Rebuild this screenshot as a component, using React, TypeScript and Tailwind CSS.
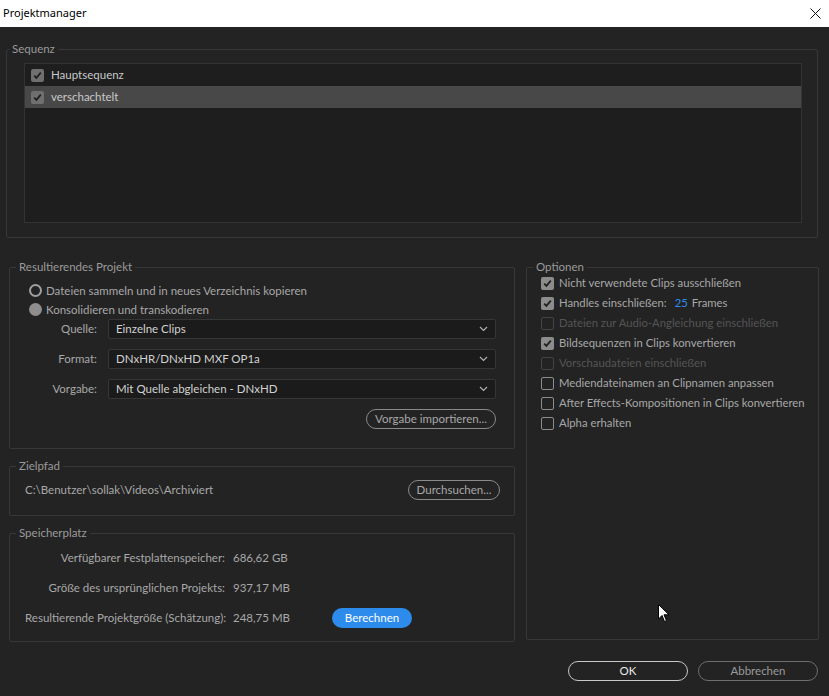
import React from "react";

const font = { fontFamily: "Lato, 'Noto Sans', sans-serif" };

function Check({ checked, disabled, dim }: { checked?: boolean; disabled?: boolean; dim?: boolean }) {
  if (checked) {
    return (
      <span className={`flex h-[13px] w-[13px] shrink-0 items-center justify-center rounded-[2px] ${dim ? "bg-[#6f6f6f]" : "bg-[#8c8c8c]"}`}>
        <svg width="9" height="9" viewBox="0 0 9 9">
          <path d="M1.2 4.6 L3.4 6.9 L7.8 1.6" fill="none" stroke="#1f1f1f" strokeWidth="1.7" />
        </svg>
      </span>
    );
  }
  return (
    <span
      className={`h-[13px] w-[13px] shrink-0 rounded-[2px] border ${disabled ? "border-[#444]" : "border-[#8c8c8c]"}`}
    />
  );
}

function Legend({ children, ml = "ml-[6px]" }: { children: React.ReactNode; ml?: string }) {
  return <legend className={`${ml} px-[3px] text-[11.5px] leading-[14px] text-[#9a9a9a]`}>{children}</legend>;
}

function Select({ value }: { value: string }) {
  return (
    <div className="flex h-[20px] flex-1 items-center justify-between rounded-[2px] border border-[#363636] bg-[#1b1b1b] pl-[7px] pr-[7px] text-[11.5px] text-[#d2d2d2]">
      <span>{value}</span>
      <svg width="9" height="6" viewBox="0 0 9 6">
        <path d="M1 1 L4.5 4.5 L8 1" fill="none" stroke="#b0b0b0" strokeWidth="1.2" />
      </svg>
    </div>
  );
}

function Pill({ children, className = "" }: { children: React.ReactNode; className?: string }) {
  return (
    <div
      className={`flex h-[20px] shrink-0 items-center justify-center rounded-full border text-[11.5px] ${className}`}
    >
      {children}
    </div>
  );
}

export default function App() {
  const options = [
    { label: "Nicht verwendete Clips ausschließen", checked: true },
    { label: "handles", checked: true },
    { label: "Dateien zur Audio-Angleichung einschließen", disabled: true },
    { label: "Bildsequenzen in Clips konvertieren", checked: true },
    { label: "Vorschaudateien einschließen", disabled: true },
    { label: "Mediendateinamen an Clipnamen anpassen" },
    { label: "After Effects-Kompositionen in Clips konvertieren" },
    { label: "Alpha erhalten" },
  ];

  return (
    <div className="relative flex h-[696px] w-[829px] flex-col overflow-hidden bg-[#232323]" style={font}>
      {/* title bar */}
      <div
        className="flex h-[27px] shrink-0 items-center justify-between bg-white pl-[3px] pr-[8px] text-[11px] text-black"
        style={{ fontFamily: "'Noto Sans', 'Open Sans', sans-serif" }}
      >
        <span>Projektmanager</span>
        <svg width="11" height="11" viewBox="0 0 11 11">
          <path d="M0.5 0.5 L10.5 10.5 M10.5 0.5 L0.5 10.5" stroke="#111" strokeWidth="1" />
        </svg>
      </div>

      <div className="flex flex-1 flex-col pt-[15px]">
        {/* Sequenz */}
        <fieldset className="ml-[6px] mr-[11px] h-[196px] rounded-[2px] border border-[#383838]">
          <Legend ml="ml-[2px]">Sequenz</Legend>
          <div className="pl-[17px] pr-[15px] pt-[7px]">
            <div className="h-[160px] border border-[#333] bg-[#1e1e1e]">
              <div className="flex h-[22px] items-center gap-[7px] pl-[6px] text-[11.5px] text-[#c8c8c8]">
                <Check checked dim />
                <span>Hauptsequenz</span>
              </div>
              <div className="flex h-[22px] items-center gap-[7px] bg-[#484848] pl-[6px] text-[11.5px] text-[#c8c8c8]">
                <Check checked dim />
                <span>verschachtelt</span>
              </div>
            </div>
          </div>
        </fieldset>

        <div className="mt-[22px] flex items-start">
          {/* left column */}
          <div className="ml-[9px] flex w-[506px] flex-col gap-[10px]">
            <fieldset className="h-[189px] rounded-[2px] border border-[#383838]">
              <Legend>Resultierendes Projekt</Legend>
              <div className="pl-[19px] pr-[18px] pt-[7px]">
                <div className="flex h-[19px] items-center gap-[4px] text-[11.5px] text-[#a8a8a8]">
                  <span className="h-[13px] w-[13px] rounded-full border-2 border-[#a0a0a0]" />
                  <span>Dateien sammeln und in neues Verzeichnis kopieren</span>
                </div>
                <div className="flex h-[19px] items-center gap-[4px] text-[11.5px] text-[#a8a8a8]">
                  <span className="h-[13px] w-[13px] rounded-full bg-[#8e8e8e]" />
                  <span>Konsolidieren und transkodieren</span>
                </div>
                <div className="flex flex-col gap-[10px]">
                  {[
                    ["Quelle:", "Einzelne Clips"],
                    ["Format:", "DNxHR/DNxHD MXF OP1a"],
                    ["Vorgabe:", "Mit Quelle abgleichen - DNxHD"],
                  ].map(([l, v]) => (
                    <div key={l} className="flex items-center">
                      <span className="w-[79px] pr-[11px] text-right text-[11.5px] text-[#a8a8a8]">{l}</span>
                      <Select value={v} />
                    </div>
                  ))}
                  <div className="flex justify-end">
                    <Pill className="w-[130px] border-[#8a8a8a] text-[#a8a8a8]">Vorgabe importieren...</Pill>
                  </div>
                </div>
              </div>
            </fieldset>

            <fieldset className="h-[57px] rounded-[2px] border border-[#383838]">
              <Legend>Zielpfad</Legend>
              <div className="flex items-center justify-between pl-[15px] pr-[14px] pt-[7px] text-[11.5px] text-[#a8a8a8]">
                <span>C:\Benutzer\sollak\Videos\Archiviert</span>
                <Pill className="w-[92px] border-[#8a8a8a] text-[#a8a8a8]">Durchsuchen...</Pill>
              </div>
            </fieldset>

            <fieldset className="h-[116px] rounded-[2px] border border-[#383838]">
              <Legend>Speicherplatz</Legend>
              <div className="flex flex-col gap-[10px] pl-[15px] pt-[8px] text-[11.5px] text-[#a8a8a8]">
                {[
                  ["Verfügbarer Festplattenspeicher:", "686,62 GB"],
                  ["Größe des ursprünglichen Projekts:", "937,17 MB"],
                  ["Resultierende Projektgröße (Schätzung):", "248,75 MB"],
                ].map(([l, v], i) => (
                  <div key={l} className="flex h-[20px] items-center">
                    <span className="w-[200px] whitespace-nowrap text-right">{l}</span>
                    <span className="ml-[8px] w-[99px]">{v}</span>
                    {i === 2 && (
                      <div className="flex h-[20px] w-[80px] items-center justify-center rounded-full bg-[#2d8ceb] text-[11.5px] text-white">
                        Berechnen
                      </div>
                    )}
                  </div>
                ))}
              </div>
            </fieldset>
          </div>

          {/* right column: Optionen */}
          <fieldset className="ml-[11px] h-[380px] w-[293px] rounded-[2px] border border-[#383838]">
            <Legend>Optionen</Legend>
            <div className="-mt-[1px] flex flex-col pl-[14px]">
              {options.map((o) => (
                <div
                  key={o.label}
                  className={`flex h-[20.1px] items-center gap-[5px] whitespace-nowrap text-[11.3px] ${
                    o.disabled ? "text-[#555]" : "text-[#a8a8a8]"
                  }`}
                >
                  <Check checked={o.checked} disabled={o.disabled} />
                  {o.label === "handles" ? (
                    <span>
                      Handles einschließen:<span className="ml-[8px] text-[#2d8ceb]">25</span>
                      <span className="ml-[4px]">Frames</span>
                    </span>
                  ) : (
                    <span>{o.label}</span>
                  )}
                </div>
              ))}
            </div>
          </fieldset>
        </div>

        {/* footer buttons */}
        <div className="mr-[11px] mt-[19px] flex justify-end gap-[10px]">
          <Pill className="w-[120px] border-[#c8c8c8] text-[#e8e8e8]">OK</Pill>
          <Pill className="w-[120px] border-[#6e6e6e] text-[#9a9a9a]">Abbrechen</Pill>
        </div>
      </div>

      {/* mouse cursor */}
      <svg className="absolute left-[658px] top-[604px]" width="12" height="19" viewBox="0 0 12 19">
        <path d="M0.5 0.5 L0.5 15 L4 11.5 L6.5 17.5 L8.5 16.7 L6 10.8 L11 10.8 Z" fill="#fff" stroke="#000" strokeWidth="1" />
      </svg>
    </div>
  );
}
